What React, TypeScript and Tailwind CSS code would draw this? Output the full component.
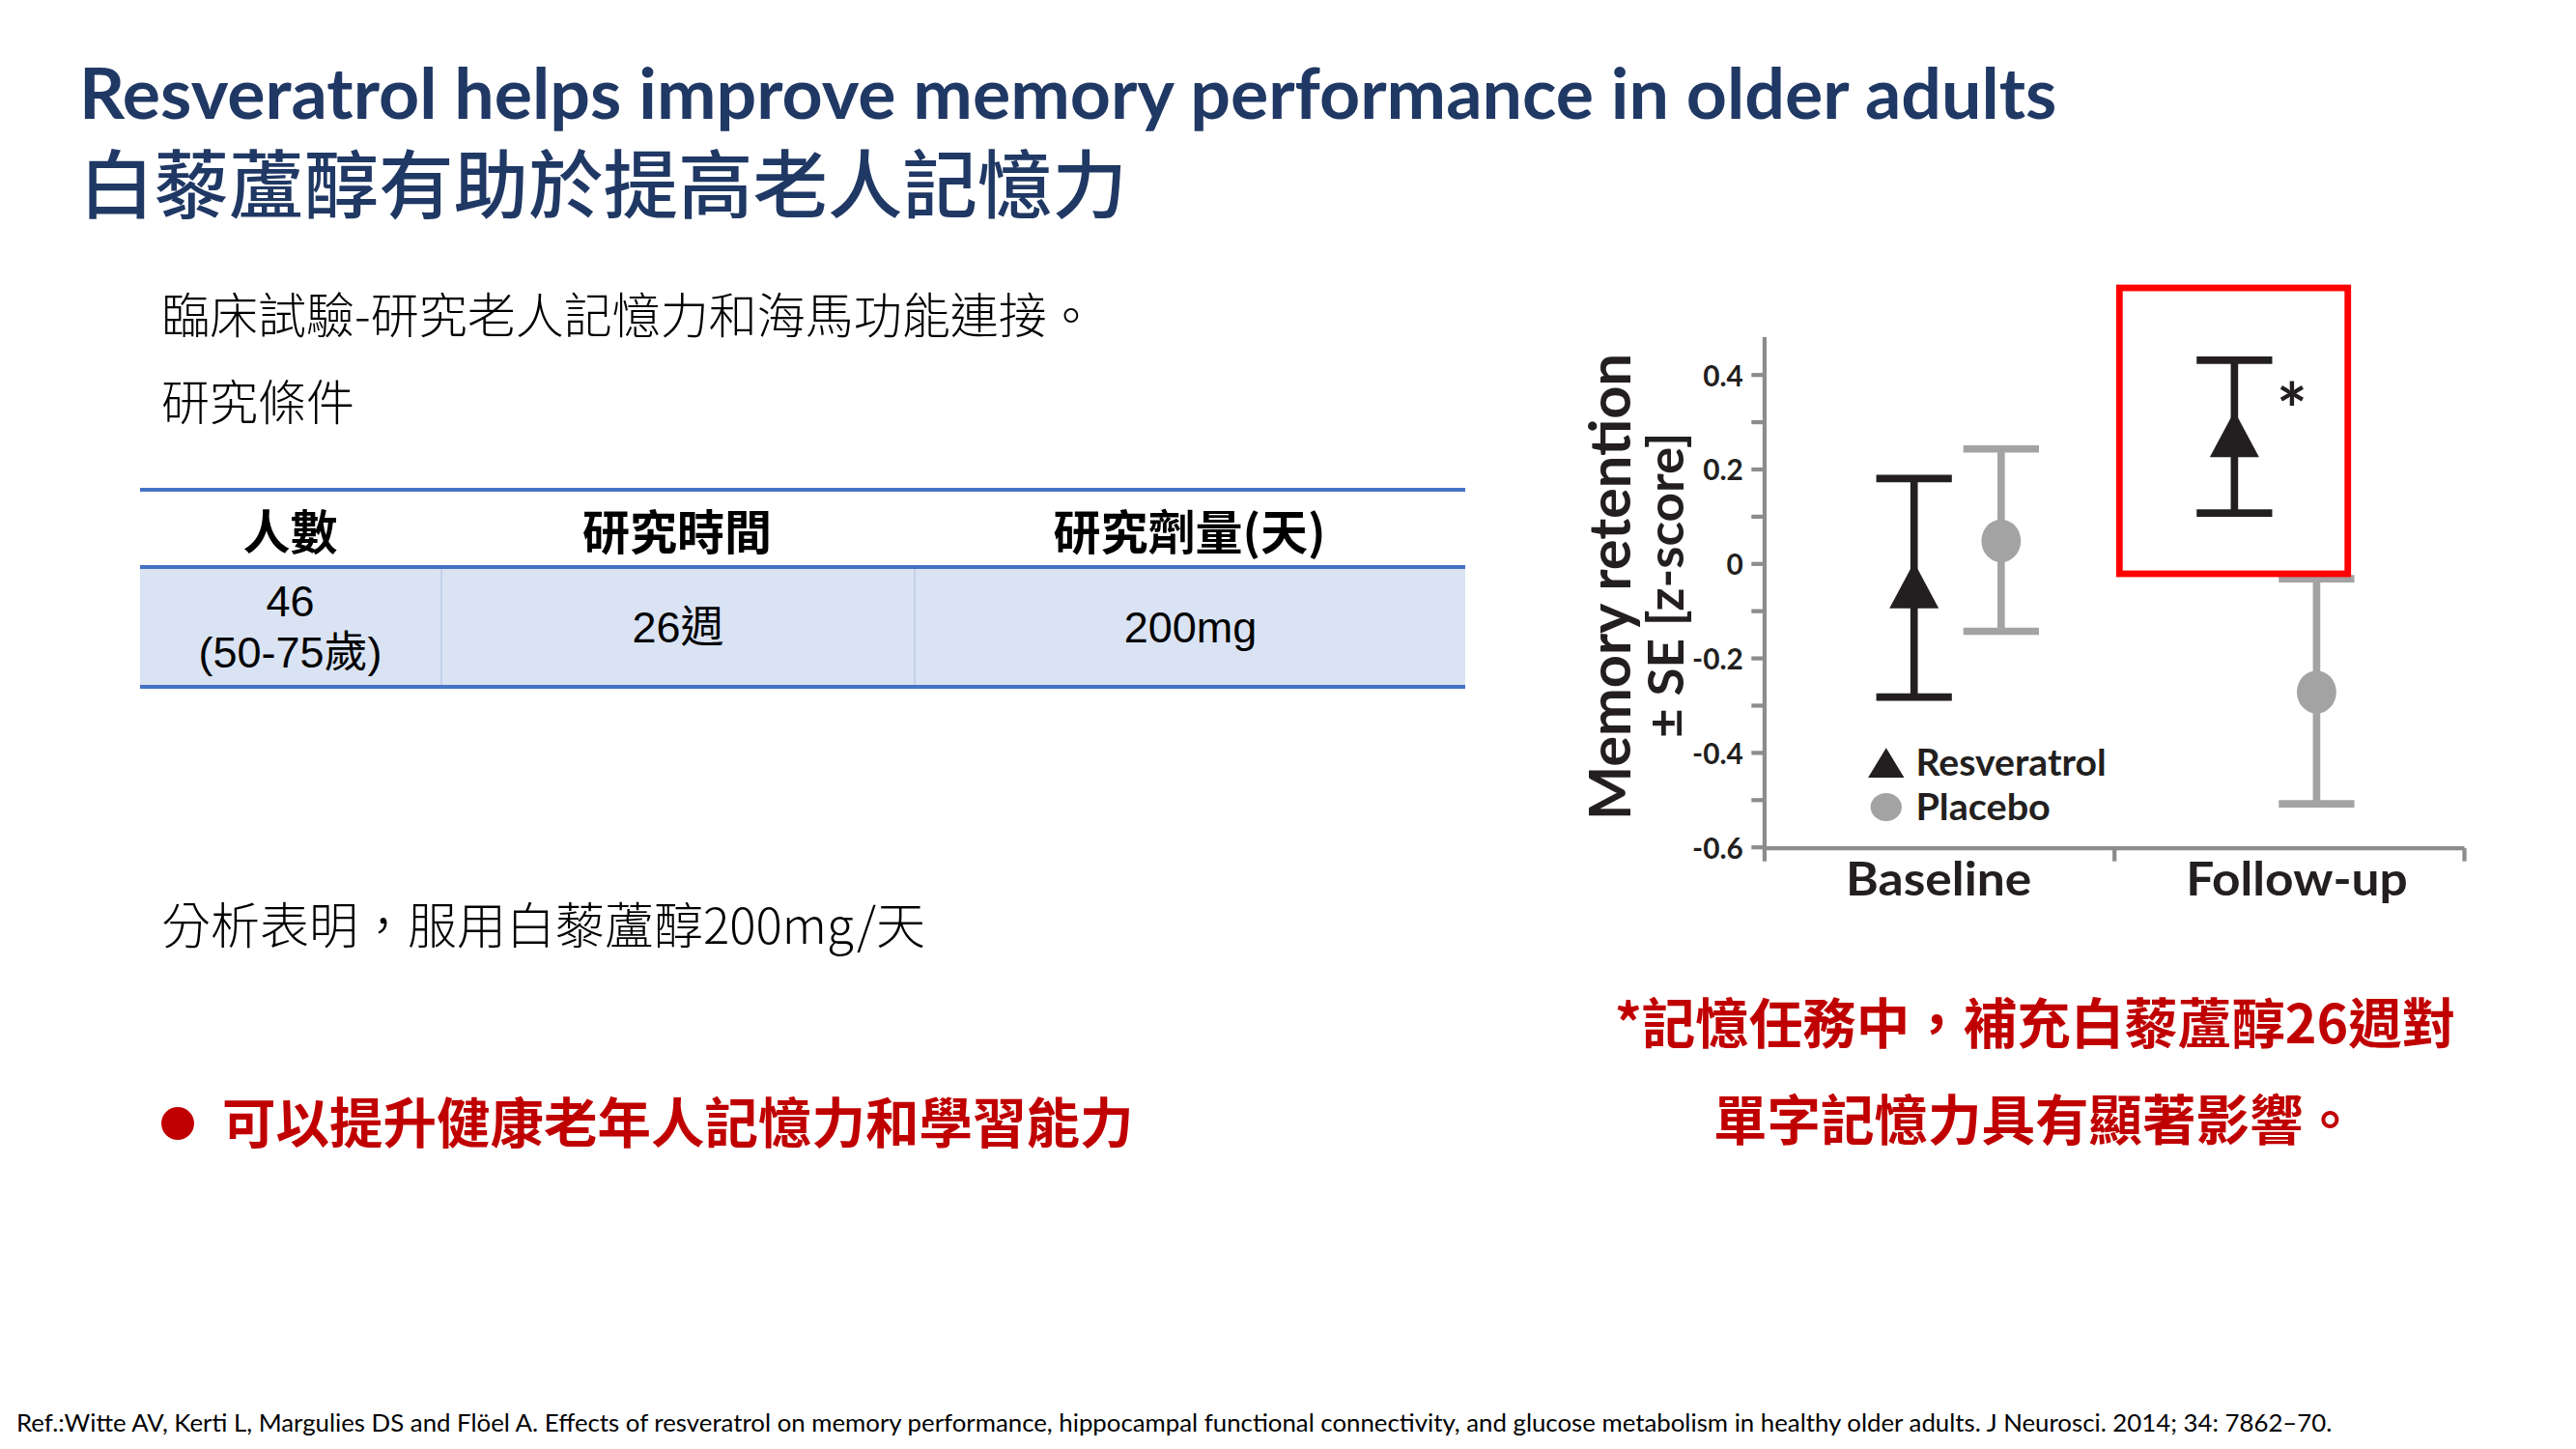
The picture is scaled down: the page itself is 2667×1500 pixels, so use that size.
import React from "react";

const NAVY = "text-[#203864]";

function Chart() {
  const black = "#231f20";
  const gray = "#a3a3a3";
  const axis = "#8c8c8c";
  const yTicks = [
    { v: "0.4", y: 228 },
    { v: "0.2", y: 285.5 },
    { v: "0", y: 343 },
    { v: "-0.2", y: 400.5 },
    { v: "-0.4", y: 458 },
    { v: "-0.6", y: 515.5 },
  ];
  const minor = [256.75, 314.25, 371.75, 429.25, 486.75];
  const bar = (x: number, top: number, bottom: number, color: string) => (
    <g stroke={color} strokeWidth={4.5}>
      <line x1={x} y1={top} x2={x} y2={bottom} />
      <line x1={x - 23} y1={top} x2={x + 23} y2={top} />
      <line x1={x - 23} y1={bottom} x2={x + 23} y2={bottom} />
    </g>
  );
  const tri = (x: number, y: number, w: number, h: number, color: string) => (
    <polygon
      points={`${x},${y - h / 2} ${x + w / 2},${y + h / 2} ${x - w / 2},${y + h / 2}`}
      fill={color}
    />
  );
  const font = "Lato, 'Open Sans', sans-serif";
  return (
    <svg viewBox="950 165 560 390" width={952.5} height={663.4} className="block">
      {/* y label */}
      <text
        x={0}
        y={0}
        transform="translate(979 357) rotate(-90)"
        textAnchor="middle"
        dominantBaseline="central"
        fontFamily={font}
        fontWeight={700}
        fontSize={35}
        fill={black}
        textLength={284}
        lengthAdjust="spacingAndGlyphs"
      >
        Memory retention
      </text>
      <text
        x={0}
        y={0}
        transform="translate(1013 356) rotate(-90)"
        textAnchor="middle"
        dominantBaseline="central"
        fontFamily={font}
        fontWeight={700}
        fontSize={30}
        fill={black}
        textLength={186}
        lengthAdjust="spacingAndGlyphs"
      >
        ± SE [z-score]
      </text>

      {/* axes */}
      <g stroke={axis} strokeWidth={2.5}>
        <line x1={1074} y1={205} x2={1074} y2={524} />
        <line x1={1074} y1={516} x2={1500} y2={516} />
        <line x1={1287} y1={516} x2={1287} y2={524} />
        <line x1={1500} y1={516} x2={1500} y2={524} />
        {yTicks.map((t) => (
          <line key={t.v} x1={1066} y1={t.y} x2={1074} y2={t.y} />
        ))}
        {minor.map((y) => (
          <line key={y} x1={1066} y1={y} x2={1074} y2={y} />
        ))}
      </g>
      {yTicks.map((t) => (
        <text
          key={t.v}
          x={1061}
          y={t.y}
          textAnchor="end"
          dominantBaseline="central"
          fontFamily={font}
          fontWeight={700}
          fontSize={17.5}
          fill={black}
        >
          {t.v}
        </text>
      ))}

      {/* data */}
      {bar(1165, 291, 424, black)}
      {tri(1165, 356, 30, 28, black)}
      {bar(1218, 273, 384, gray)}
      <ellipse cx={1218} cy={329} rx={12} ry={13} fill={gray} />

      {bar(1410, 352, 489, gray)}
      <ellipse cx={1410} cy={421} rx={12} ry={13} fill={gray} />

      {bar(1360, 219, 312, black)}
      {tri(1360, 264, 30, 28, black)}
      <text
        x={1395}
        y={265}
        textAnchor="middle"
        fontFamily={font}
        fontWeight={700}
        fontSize={44}
        fill={black}
      >
        *
      </text>

      {/* red highlight box */}
      <rect x={1290} y={175} width={139} height={174} fill="none" stroke="#ff0000" strokeWidth={4} />

      {/* legend */}
      {tri(1148, 464, 22, 18, black)}
      <text
        x={1166}
        y={472}
        fontFamily={font}
        fontWeight={700}
        fontSize={22}
        fill={black}
        textLength={116}
        lengthAdjust="spacingAndGlyphs"
      >
        Resveratrol
      </text>
      <ellipse cx={1148} cy={491} rx={9.5} ry={8.5} fill={gray} />
      <text
        x={1166}
        y={499}
        fontFamily={font}
        fontWeight={700}
        fontSize={22}
        fill={black}
        textLength={82}
        lengthAdjust="spacingAndGlyphs"
      >
        Placebo
      </text>

      {/* x labels */}
      <text
        x={1180}
        y={545}
        textAnchor="middle"
        fontFamily={font}
        fontWeight={700}
        fontSize={28}
        fill={black}
        textLength={113}
        lengthAdjust="spacingAndGlyphs"
      >
        Baseline
      </text>
      <text
        x={1398}
        y={545}
        textAnchor="middle"
        fontFamily={font}
        fontWeight={700}
        fontSize={28}
        fill={black}
        textLength={135}
        lengthAdjust="spacingAndGlyphs"
      >
        Follow-up
      </text>
    </svg>
  );
}

export default function App() {
  return (
    <div className="w-[2667px] h-[1500px] bg-white flex flex-col overflow-hidden font-['Lato','Noto_Sans_CJK_TC',sans-serif]">
      <header className={`pl-[82px] pt-[48px] ${NAVY}`}>
        <h1 className="text-[73.5px] leading-[93px] font-bold">
          Resveratrol helps improve memory performance in older adults
        </h1>
        <h2 className="text-[77.5px] leading-[90px] font-medium font-['Noto_Sans_CJK_TC',sans-serif]">
          白藜蘆醇有助於提高老人記憶力
        </h2>
      </header>

      <main className="flex flex-1">
        <section className="w-[1616px] shrink-0 flex flex-col text-black font-['Noto_Sans_CJK_TC',sans-serif]">
          <p className="pl-[167px] mt-[60px] text-[50px] leading-[64px] font-light">
            臨床試驗-研究老人記憶力和海馬功能連接。
          </p>
          <p className="pl-[167px] mt-[26px] text-[50px] leading-[64px] font-light">
            研究條件
          </p>

          <div className="ml-[145px] mt-[60px] w-[1372px] border-t-4 border-b-4 border-[#4472c4]">
            <div className="grid grid-cols-[311px_490px_571px] h-[80px] items-center text-[49px] font-bold leading-none border-b-4 border-[#4472c4]">
              <div className="text-center">人數</div>
              <div className="text-center">研究時間</div>
              <div className="text-center">研究劑量(天)</div>
            </div>
            <div className="grid grid-cols-[311px_490px_571px] h-[120px] bg-[#dae3f3] text-[45px] leading-[53px] font-['Liberation_Sans','Noto_Sans_CJK_TC',sans-serif]">
              <div className="flex flex-col items-center justify-center">
                <span>46</span>
                <span>(50-75歲)</span>
              </div>
              <div className="flex items-center justify-center border-l-2 border-[#c3d1ea]">26週</div>
              <div className="flex items-center justify-center border-l-2 border-[#c3d1ea]">200mg</div>
            </div>
          </div>

          <p className="pl-[167px] mt-[206px] text-[51px] leading-[72px] font-light">
            分析表明，服用白藜蘆醇200mg/天
          </p>

          <div className="pl-[167px] mt-[132px] flex items-center gap-[29px] text-[#c00000]">
            <span className="w-[34px] h-[34px] rounded-full bg-[#c00000] shrink-0 translate-y-[4px]" />
            <span className="text-[55.5px] leading-[72px] font-bold">
              可以提升健康老年人記憶力和學習能力
            </span>
          </div>
        </section>

        <section className="flex-1 flex flex-col pt-[50px]">
          <Chart />
          <div className="w-[952px] pl-[30px] mt-[62px] text-center text-[#c00000] font-bold text-[55.5px] leading-[100px] font-['Noto_Sans_CJK_TC',sans-serif]">
            <p>*記憶任務中，補充白藜蘆醇26週對</p>
            <p>單字記憶力具有顯著影響。</p>
          </div>
        </section>
      </main>

      <footer className="pl-[17px] pb-[12px] text-[25.8px] leading-[32px] text-black font-['Lato',sans-serif] whitespace-nowrap">
        Ref.:Witte AV, Kerti L, Margulies DS and Flöel A. Effects of resveratrol on memory performance, hippocampal functional connectivity, and glucose metabolism in healthy older adults. J Neurosci. 2014; 34: 7862–70.
      </footer>
    </div>
  );
}
